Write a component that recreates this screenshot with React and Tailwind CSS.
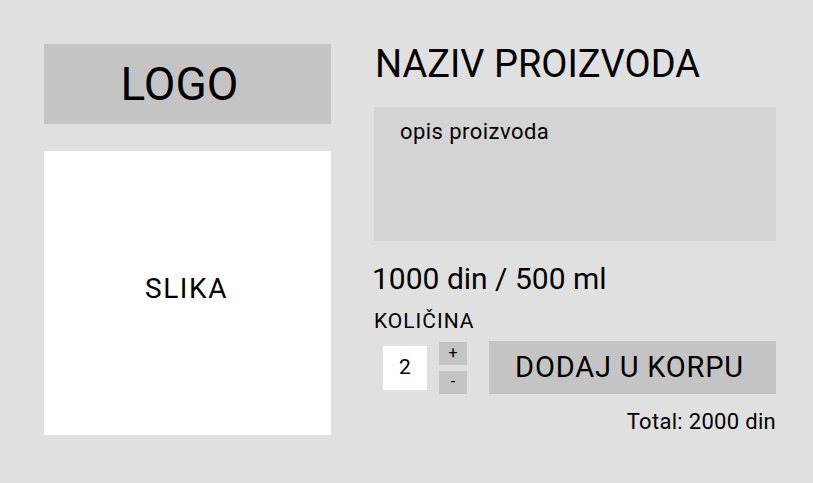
import { useState } from 'react'

export default function App() {
  const [qty, setQty] = useState(2)
  const price = 1000

  return (
    <div className="w-[813px] h-[483px] bg-[#e0e0e0] font-['Roboto',sans-serif] text-black overflow-hidden">
      <div className="flex pt-[44px] pl-[44px] gap-[43px]">
        {/* Left column */}
        <div className="w-[287px] flex flex-col gap-[27px]">
          <div className="h-[80px] bg-[#c4c4c4] flex items-center justify-center pr-[16px]">
            <span className="text-[46px] leading-none">LOGO</span>
          </div>
          <div className="h-[284px] bg-white flex items-center justify-center pb-[8px] pr-[2px]">
            <span className="text-[28px] leading-none tracking-[1.6px]">SLIKA</span>
          </div>
        </div>

        {/* Right column */}
        <div className="w-[402px] flex flex-col">
          <h1 className="text-[38px] leading-[44px] -mt-[2px] pl-[1px]">NAZIV PROIZVODA</h1>
          <div className="mt-[21px] h-[134px] bg-[#d4d4d4] pl-[26px] pt-[13px]">
            <p className="text-[22px] leading-[24px] tracking-[0.45px]">opis proizvoda</p>
          </div>
          <p className="mt-[20px] text-[30px] leading-[36px] -ml-[2px]">1000 din / 500 ml</p>
          <p className="mt-[12px] text-[21px] leading-[24px] tracking-[1px]">KOLIČINA</p>
          <div className="mt-[8px] flex items-center">
            <div className="ml-[9px] w-[44px] h-[44px] bg-white flex items-center justify-center text-[21px]">
              {qty}
            </div>
            <div className="ml-[12px] flex flex-col gap-[6px]">
              <button
                onClick={() => setQty(q => q + 1)}
                className="w-[28px] h-[23px] bg-[#c4c4c4] flex items-center justify-center text-[16px] leading-none"
              >
                +
              </button>
              <button
                onClick={() => setQty(q => Math.max(1, q - 1))}
                className="w-[28px] h-[23px] bg-[#c4c4c4] flex items-center justify-center text-[16px] leading-none"
              >
                -
              </button>
            </div>
            <button className="ml-[22px] w-[287px] h-[53px] bg-[#c4c4c4] text-[29px] leading-none tracking-[0.8px] pr-[6px]">
              DODAJ U KORPU
            </button>
          </div>
          <p className="mt-[16px] text-right text-[22px] leading-[24px] tracking-[0.3px]">Total: {qty * price} din</p>
        </div>
      </div>
    </div>
  )
}
